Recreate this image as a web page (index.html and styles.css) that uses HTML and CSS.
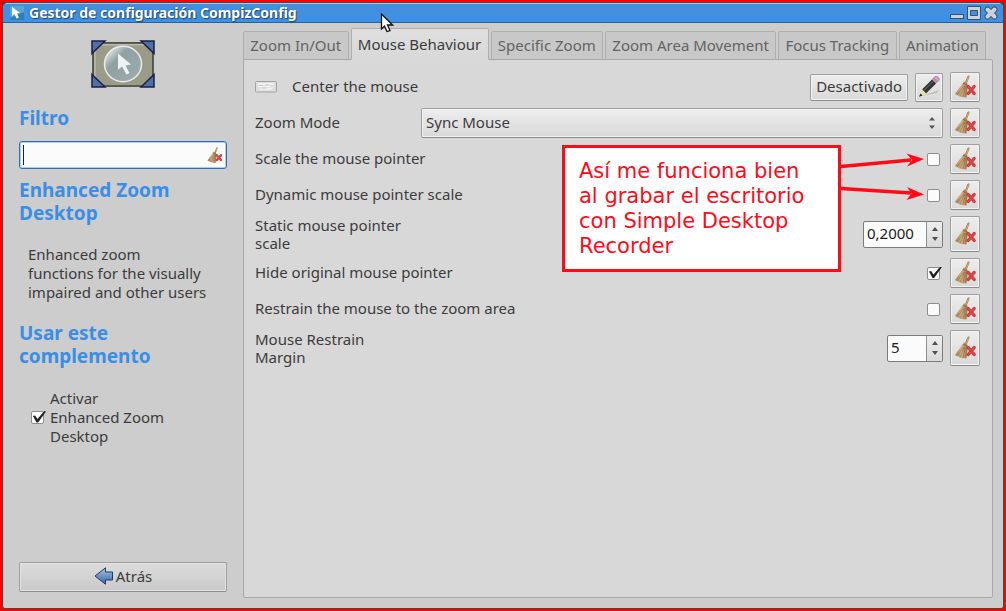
FILE: index.html
```
<!DOCTYPE html>
<html lang="es">
<head>
<meta charset="utf-8">
<title>Gestor de configuración CompizConfig</title>
<link rel="stylesheet" href="styles.css">
</head>
<body>
<svg class="defs" aria-hidden="true">
  <defs>
    <linearGradient id="straw" x1="0" y1="0" x2="1" y2="0"><stop offset="0" stop-color="#a17e50"/><stop offset=".5" stop-color="#cfae80"/><stop offset="1" stop-color="#a07c50"/></linearGradient>
    <linearGradient id="blue" x1="0" y1="0" x2="0" y2="1"><stop offset="0" stop-color="#aac4e6"/><stop offset="1" stop-color="#3465a4"/></linearGradient>
    <linearGradient id="glass" x1="0" y1="0" x2="1" y2="1"><stop offset=".1" stop-color="#e6ebeb"/><stop offset=".35" stop-color="#8fa1a3"/><stop offset="1" stop-color="#a0acab"/></linearGradient>
    <symbol id="broom" viewBox="0 0 24 24">
      <path d="M15.500 1.500 12.800 8" stroke="#9a774a" stroke-width="2" stroke-linecap="round"/>
      <path d="M15.500 1.500 13.200 8" stroke="#d0b284" stroke-width="1"/>
      <path d="M10.800 6.500 14 7.500 14.800 12 13.500 22.500 8 22 2 19 7 12Z" fill="url(#straw)"/>
      <path d="M10.500 11 4.500 19.500M11.500 11 7 21.500M12.500 11 10 22M13.500 11 12.500 22" stroke="#87663d" stroke-width=".5"/>
      <path d="M10 8.500 14.300 9.800" stroke="#93643a" stroke-width="1"/>
      <path d="M15.200 11.500 21.200 18.500M21.200 11.500 15.200 18.500" stroke="#c4353a" stroke-width="3.200" stroke-linecap="round"/>
      <path d="M15.200 11.500 21.200 18.500M21.200 11.500 15.200 18.500" stroke="#e14a4c" stroke-width="1.500" stroke-linecap="round"/>
    </symbol>
    <symbol id="arrows" viewBox="0 0 6 12"><path d="M0 3.500 3 0 6 3.500ZM0 8.500 3 12 6 8.500Z" fill="#555"/></symbol>
    <symbol id="up" viewBox="0 0 6 4"><path d="M0 4 3 0 6 4Z" fill="#505050"/></symbol>
    <symbol id="down" viewBox="0 0 6 4"><path d="M0 0 3 4 6 0Z" fill="#505050"/></symbol>
  </defs>
</svg>
<div class="window">
  <header class="titlebar">
    <svg class="app-icon" viewBox="0 0 14 14"><rect width="14" height="14" rx="1" fill="#2d7fb5"/><path d="M0 0H14V6L0 12Z" fill="#58a5d2"/><path d="M2 1V10L4.500 8 6.500 12.500 9 11.500 7 7H10Z" fill="#fff"/></svg>
    <h1 class="title">Gestor de configuración CompizConfig</h1>
    <div class="controls">
      <button class="control" aria-label="Minimizar"><svg viewBox="0 0 14 14"><rect x=".5" y="8.500" width="13" height="4" fill="#ccd2d9" stroke="#34516e"/></svg></button>
      <button class="control" aria-label="Maximizar"><svg viewBox="0 0 14 14"><path fill-rule="evenodd" d="M.5.5H13.500V13.500H.5ZM3.500 4.500V9.500H10.500V4.500Z" fill="#ccd2d9" stroke="#34516e"/></svg></button>
      <button class="control" aria-label="Cerrar"><svg viewBox="0 0 14 14"><path d="M3.500 3.500 10.500 10.500M10.500 3.500 3.500 10.500" stroke="#34516e" stroke-width="6" stroke-linecap="round"/><path d="M3.500 3.500 10.500 10.500M10.500 3.500 3.500 10.500" stroke="#ccd2d9" stroke-width="4" stroke-linecap="round"/></svg></button>
    </div>
  </header>
  <div class="content">
    <aside class="sidebar">
      <svg class="plugin-icon" viewBox="0 0 64 50" preserveAspectRatio="none">
        <rect x="2" y="3" width="60" height="45" fill="#9b9c88" stroke="#3b3d36" stroke-width="1.500"/>
        <path d="M4 46V5H60" fill="none" stroke="#c9cab8"/>
        <path d="M1 1H14L1 14ZM63 1H50L63 14ZM1 49H14L1 36ZM63 49H50L63 36Z" fill="#4f70a4" stroke="#1b1f44" stroke-width="1.500"/>
        <circle cx="32" cy="25" r="18.500" fill="url(#glass)" stroke="#e9ecea" stroke-width="1.500"/>
        <path d="M27 14V31L31 27.500 35.500 36 38.500 34.500 34.500 26.500 40 25.500Z" fill="#eef1f6"/>
      </svg>
      <h2 class="heading"><label for="filter">Filtro</label></h2>
      <div class="filter">
        <input id="filter" class="filter-input" type="text">
        <button class="clear" aria-label="Borrar"><svg viewBox="0 0 24 24"><use href="#broom"/></svg></button>
      </div>
      <h2 class="heading">Enhanced Zoom Desktop</h2>
      <p class="description">Enhanced zoom functions for the visually impaired and other users</p>
      <h2 class="heading">Usar este complemento</h2>
      <div class="enable"><input class="check" type="checkbox" id="enable" checked><label for="enable">Activar Enhanced Zoom Desktop</label></div>
      <button class="button back"><svg viewBox="0 0 20 18"><path d="M1 9 11.500 .8V5H18.500V13H11.500V17.200Z" fill="url(#blue)" stroke="#203b66"/></svg>Atrás</button>
    </aside>
    <main class="notebook">
      <nav class="tabs">
        <button class="tab">Zoom In/Out</button>
        <button class="tab active">Mouse Behaviour</button>
        <button class="tab">Specific Zoom</button>
        <button class="tab">Zoom Area Movement</button>
        <button class="tab">Focus Tracking</button>
        <button class="tab">Animation</button>
      </nav>
      <section class="panel">
        <div class="row">
          <svg class="keyboard" viewBox="0 0 22 12"><rect x=".5" y=".5" width="21" height="10.500" rx="1" fill="#ddd" stroke="#a2a2a2"/><path d="M3 3H19M3 5.500H19M5 8H17" stroke="#f8f8f8" stroke-width="1.500"/><path d="M4 4.500H8M10 4H14M15 5H18M6 7H12" stroke="#b8b8b8" stroke-width=".7"/></svg>
          <span class="name">Center the mouse</span>
          <button class="button binding">Desactivado</button>
          <button class="button edit" aria-label="Editar"><svg viewBox="0 0 24 24"><path d="M5 21 22 15 20 18Z" fill="#bdbdbd"/><path d="M5 14.500 16 3.500 20 7.500 9 18.500Z" fill="#333"/><path d="M6.500 16 17.500 5" stroke="#747474" stroke-width="1"/><path d="M15 4.500 17 2.500 21 6.500 19 8.500Z" fill="#aaa"/><path d="M16.500 3 18 1.500Q20 .8 21.500 2.500T22 5.500L20.500 7Z" fill="#d89bd0" stroke="#a05f99" stroke-width=".6"/><path d="M5 14.500 9 18.500 2.500 21.500Z" fill="#eedf91"/><path d="M2 21.800 3.500 18.500 5.500 20.500Z" fill="#222"/></svg></button>
          <button class="button reset" aria-label="Restablecer"><svg viewBox="0 0 24 24"><use href="#broom"/></svg></button>
        </div>
        <div class="row">
          <label class="name" for="mode">Zoom Mode</label>
          <div class="combo"><select class="button select" id="mode"><option>Sync Mouse</option></select><svg class="combo-arrows" viewBox="0 0 6 12"><use href="#arrows"/></svg></div>
          <button class="button reset" aria-label="Restablecer"><svg viewBox="0 0 24 24"><use href="#broom"/></svg></button>
        </div>
        <div class="row">
          <label class="name" for="scale">Scale the mouse pointer</label>
          <input class="check" type="checkbox" id="scale">
          <button class="button reset" aria-label="Restablecer"><svg viewBox="0 0 24 24"><use href="#broom"/></svg></button>
        </div>
        <div class="row">
          <label class="name" for="dynamic">Dynamic mouse pointer scale</label>
          <input class="check" type="checkbox" id="dynamic">
          <button class="button reset" aria-label="Restablecer"><svg viewBox="0 0 24 24"><use href="#broom"/></svg></button>
        </div>
        <div class="row tall">
          <label class="name" for="static"><span class="wrap">Static mouse pointer scale</span></label>
          <div class="spin"><input id="static" class="spin-input wide" type="text" value="0,2000"><div class="steps"><button aria-label="Aumentar"><svg viewBox="0 0 6 4"><use href="#up"/></svg></button><button aria-label="Reducir"><svg viewBox="0 0 6 4"><use href="#down"/></svg></button></div></div>
          <button class="button reset" aria-label="Restablecer"><svg viewBox="0 0 24 24"><use href="#broom"/></svg></button>
        </div>
        <div class="row">
          <label class="name" for="hide">Hide original mouse pointer</label>
          <input class="check" type="checkbox" id="hide" checked>
          <button class="button reset" aria-label="Restablecer"><svg viewBox="0 0 24 24"><use href="#broom"/></svg></button>
        </div>
        <div class="row">
          <label class="name" for="restrain">Restrain the mouse to the zoom area</label>
          <input class="check" type="checkbox" id="restrain">
          <button class="button reset" aria-label="Restablecer"><svg viewBox="0 0 24 24"><use href="#broom"/></svg></button>
        </div>
        <div class="row tall">
          <label class="name" for="margin"><span class="wrap">Mouse Restrain Margin</span></label>
          <div class="spin"><input id="margin" class="spin-input" type="text" value="5"><div class="steps"><button aria-label="Aumentar"><svg viewBox="0 0 6 4"><use href="#up"/></svg></button><button aria-label="Reducir"><svg viewBox="0 0 6 4"><use href="#down"/></svg></button></div></div>
          <button class="button reset" aria-label="Restablecer"><svg viewBox="0 0 24 24"><use href="#broom"/></svg></button>
        </div>
      </section>
    </main>
  </div>
</div>
<div class="note">
  <svg class="note-arrows" viewBox="0 0 84 60"><path d="M0 21.500 70 15M0 43.500 70 48" stroke="#ff0a17" stroke-width="3.500"/><path d="M83 14 66 21.500 71 15 65.500 8.500ZM83 49.500 65.500 55 70.500 48.500 66 42Z" fill="#ff0a17"/></svg>
  <p class="note-text">Así me funciona bien al grabar el escritorio con Simple Desktop Recorder</p>
</div>
<svg class="pointer" viewBox="0 0 14 20"><path d="M1.500 1V16L4.500 13 7 18.500 10 17.500 7.500 12H12.500Z" fill="#fff" stroke="#111" stroke-width="1.300"/></svg>
</body>
</html>
```
FILE: styles.css
```
* { box-sizing: border-box; }
body {
  margin: 0;
  height: 100vh;
  border: 2px solid #f00;
  background: #404549;
  color: #3c3c3c;
  font: 15px/19px "Noto Sans", "Open Sans", sans-serif;
  overflow: hidden;
}
button, input, select { font: inherit; color: inherit; }
button { padding: 0; border: 0; background: none; }
svg { display: block; fill: none; flex: none; }
h1, h2, p { margin: 0; }
.defs { position: absolute; width: 0; height: 0; }
.window {
  display: flex;
  flex-direction: column;
  height: 100%;
  border: 1px solid #45494c;
  border-radius: 6px 6px 3px 3px;
  background: #cdcdcd;
  overflow: hidden;
}
.titlebar {
  display: flex;
  align-items: center;
  flex: none;
  height: 20px;
  padding: 0 5px 0 7px;
  gap: 5px;
  border-top: 1px solid #9fc8ef;
  border-bottom: 1px solid #2c5f92;
  background: linear-gradient(#468edb, #3c91e8);
}
.app-icon { width: 14px; height: 14px; }
.title {
  flex: 1;
  color: #fff;
  font-size: 14px;
  font-weight: 700;
  line-height: 18px;
  text-shadow: 1px 1px 1px #1d4874, -1px 0 1px #356fa9;
}
.controls { display: flex; gap: 3px; }
.control, .control svg { width: 14px; height: 14px; }
.content {
  display: flex;
  flex: 1;
  gap: 16px;
  padding: 5px 10px 10px 16px;
}
.sidebar { display: flex; flex-direction: column; flex: none; width: 208px; padding: 12px 0 6px; }
.plugin-icon { width: 64px; height: 48px; align-self: center; margin-bottom: 19px; }
.heading { color: #398ee7; font-size: 19px; font-weight: 700; line-height: 23px; }
.filter {
  display: flex;
  align-items: center;
  height: 28px;
  margin: 11px 0 10px;
  padding: 3px;
  border: 1px solid #2f6db4;
  border-radius: 3px;
  box-shadow: inset 0 0 0 1px #a9cdf3;
  background: #fbfbfb;
}
.filter-input {
  flex: 1;
  min-width: 0;
  height: 20px;
  padding: 0 3px;
  border: 0;
  border-left: 1px solid #222;
  outline: 0;
  background: none;
}
.clear svg { width: 17px; height: 17px; }
.description { width: 181px; margin: 20px 0 20px 9px; }
.enable { display: flex; align-items: center; gap: 3px; margin: 21px 60px 0 12px; }
.check {
  position: relative;
  flex: none;
  appearance: none;
  width: 13px;
  height: 13px;
  margin: 0 3px 0 0;
  border: 1px solid #8e8e8e;
  border-radius: 2px;
  background: #fbfbfb;
}
.check:checked::after {
  content: "";
  position: absolute;
  inset: -1px -3px 0 0;
  background: #222;
  clip-path: polygon(7% 42%, 22% 38%, 39% 66%, 88% 0, 100% 4%, 44% 96%, 32% 96%);
}
.button {
  display: flex;
  align-items: center;
  justify-content: center;
  border: 1px solid #9f9f9f;
  border-bottom-color: #8c8c8c;
  border-radius: 2px;
  background: linear-gradient(#ededed, #d9d9d9);
  box-shadow: inset 0 0 0 1px #f3f3f3;
}
.back {
  height: 30px;
  margin-top: auto;
  padding-bottom: 2px;
  gap: 2px;
  background: linear-gradient(#dcdcdc, #c9c9c9);
  box-shadow: inset 0 0 0 1px #e2e2e2;
}
.back svg { width: 20px; height: 18px; }
.notebook { display: flex; flex-direction: column; flex: 1; min-width: 0; }
.tabs { display: flex; align-items: flex-end; gap: 2px; height: 32px; padding-right: 7px; }
.tab {
  flex: 1 0 auto;
  height: 29px;
  padding: 0 3px;
  border: 1px solid #aeaeae;
  border-radius: 2px 2px 0 0;
  background: #c8c8c8;
  color: #636363;
  white-space: nowrap;
}
.tab.active {
  z-index: 1;
  height: 32px;
  border-bottom-color: #d8d8d8;
  background: linear-gradient(#dfdfdf, #d8d8d8);
  color: #3c3c3c;
}
.panel {
  display: flex;
  flex-direction: column;
  flex: 1;
  gap: 6px;
  margin-top: -1px;
  padding: 12px 12px 12px 11px;
  border: 1px solid #a9a9a9;
  border-radius: 0 2px 2px 2px;
  background: #d8d8d8;
}
.row { display: flex; align-items: center; gap: 7px; min-height: 30px; }
.row.tall { min-height: 36px; }
.name { flex: 1; padding-bottom: 2px; }
.tall .name { padding-bottom: 0; }
.wrap { display: block; width: 150px; line-height: 18px; }
.keyboard { width: 22px; height: 12px; margin-right: 8px; }
.binding { height: 27px; padding: 0 5px 2px; }
.edit { width: 28px; height: 29px; }
.reset { align-self: stretch; width: 30px; }
.edit svg, .reset svg { width: 24px; height: 24px; }
.combo { position: relative; width: 522px; }
.select { appearance: none; width: 100%; height: 30px; padding: 0 4px 2px; }
.combo-arrows { position: absolute; top: 9px; right: 8px; width: 6px; height: 12px; }
.row .check { margin-right: 3px; }
.spin { display: flex; height: 27px; border: 1px solid #7b7b7b; border-radius: 2px; background: #fbfbfb; color: #222; }
.spin-input { width: 38px; padding: 0 3px 2px; border: 0; background: none; }
.spin-input.wide { width: 62px; }
.steps {
  display: flex;
  flex-direction: column;
  justify-content: center;
  gap: 6px;
  width: 16px;
  border-left: 1px solid #8e8e8e;
  background: linear-gradient(#eee, #d9d9d9);
}
.steps button { display: flex; justify-content: center; }
.steps svg { width: 6px; height: 4px; }
.note {
  position: absolute;
  z-index: 2;
  left: 562px;
  top: 145px;
  width: 279px;
  padding: 11px 24px 10px 14px;
  border: 3px solid #ff0a17;
  background: #fff;
  color: #ff0a17;
  font: 21px/25px "DejaVu Sans", sans-serif;
}
.note-arrows { position: absolute; left: 276px; top: -3px; width: 84px; height: 60px; }
.pointer { position: absolute; z-index: 2; left: 380px; top: 13px; width: 14px; height: 20px; }
```
